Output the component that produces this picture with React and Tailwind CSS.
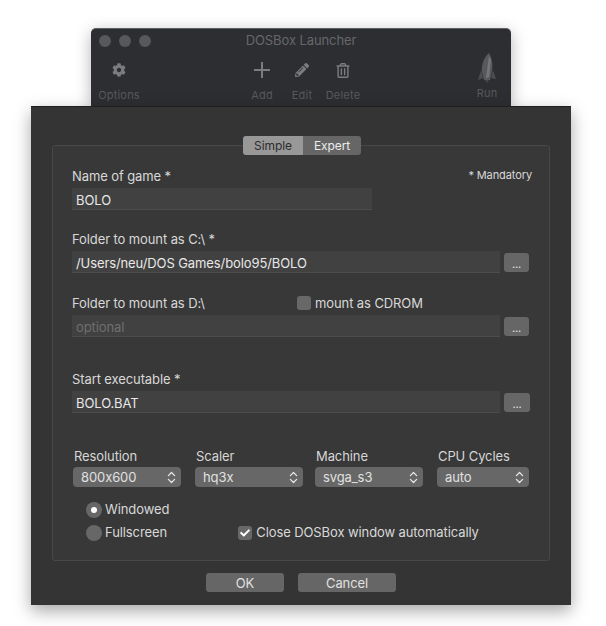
import React from "react";
import { FaCog, FaPencilAlt, FaRegTrashAlt, FaCheck } from "react-icons/fa";
import { LuChevronsUpDown } from "react-icons/lu";

function ToolItem({ label, className, children }) {
  return (
    <div className={`flex flex-col items-center ${className}`}>
      <div className="h-[34px] flex items-center justify-center text-[#7b7c7e]">{children}</div>
      <span className="mt-[1px] text-[11px] leading-[14px] tracking-[0.2px] text-[#58595c]">{label}</span>
    </div>
  );
}

function TextInput({ value, className, muted }) {
  return (
    <div
      className={`h-[22px] bg-[#414141] border-b border-[#4c4c4c] pl-[4px] pt-[5px] flex items-center text-[13px] ${
        muted ? "text-[#6f6f6f]" : "text-[#e8e8e8]"
      } ${className}`}
    >
      {value}
    </div>
  );
}

function BrowseButton({ className }) {
  return (
    <div className={`h-[19px] mt-[2px] rounded-[3px] bg-[#666666] flex items-end justify-center pb-[1px] text-[11px] leading-[14px] text-[#e4e4e4] ${className}`}>
      ...
    </div>
  );
}

function Select({ label, value, className }) {
  return (
    <div className={`flex flex-col ${className}`}>
      <span className="pl-[1px] h-[19px] text-[13px] leading-[16px] text-[#d6d6d6]">{label}</span>
      <div className="h-[20px] rounded-[4px] bg-[#676767] pl-[8px] pr-[2px] pt-[1px] flex items-center justify-between text-[13px] text-[#e0e0e0]">
        {value}
        <LuChevronsUpDown className="w-[15px] h-[15px] text-[#e8e8e8]" strokeWidth={2} />
      </div>
    </div>
  );
}

function Radio({ label, checked }) {
  return (
    <div className="h-[23px] flex items-center gap-[3px] text-[13px] text-[#d8d8d8]">
      <div className="w-[16px] h-[16px] rounded-full bg-[#676767] flex items-center justify-center">
        {checked && <div className="w-[6px] h-[6px] rounded-full bg-white" />}
      </div>
      {label}
    </div>
  );
}

function Checkbox({ checked, className }) {
  return (
    <div className={`w-[14px] h-[14px] rounded-[3px] bg-[#686868] flex items-center justify-center text-white ${className}`}>
      {checked && <FaCheck className="w-[10px] h-[10px]" />}
    </div>
  );
}

function Rocket() {
  return (
    <svg width="20" height="31" viewBox="0 0 20 31" fill="none">
      <path d="M4 17 L1 27 L6 25 Z M16 17 L19 26 L14 25 Z" fill="#4c4d50" />
      <path d="M12 0 C15 5 16 12 15 18 L13 27 L7 27 L5 19 C4 12 7 4 12 0 Z" fill="#58595c" />
      <path d="M12 3 L14 7 L12 24 L9 25 Z" fill="#75767a" />
      <path d="M8 27 L12 27 L10 30 Z" fill="#47484a" />
    </svg>
  );
}

export default function App() {
  return (
    <div className="w-[606px] h-[626px] bg-white pt-[28px] overflow-hidden font-['Inter','Liberation_Sans',sans-serif] [font-feature-settings:'calt'_0] tracking-[-0.1px]">
      {/* Launcher window behind the sheet */}
      <div className="ml-[91px] w-[420px] h-[78px] rounded-t-[5px] bg-[#2d2e31] border-t border-[#5f6062] shadow-[0_4px_16px_rgba(0,0,0,0.3)] relative">
        <div className="h-[23px] flex items-center relative">
          <div className="flex gap-[8px] pl-[8px]">
            <div className="w-[12px] h-[12px] rounded-full bg-[#57585a]" />
            <div className="w-[12px] h-[12px] rounded-full bg-[#57585a]" />
            <div className="w-[12px] h-[12px] rounded-full bg-[#57585a]" />
          </div>
          <span className="absolute inset-x-0 text-center text-[13px] text-[#66676a]">DOSBox Launcher</span>
        </div>
        <div className="flex pt-[1px]">
          <ToolItem label="Options" className="w-[56px]">
            <FaCog className="w-[14px] h-[14px]" />
          </ToolItem>
          <ToolItem label="Add" className="w-[40px] ml-[95px]">
            <svg width="18" height="18" viewBox="0 0 18 18">
              <path d="M9 1v16M1 9h16" stroke="currentColor" strokeWidth="2" />
            </svg>
          </ToolItem>
          <ToolItem label="Edit" className="w-[40px]">
            <FaPencilAlt className="w-[14px] h-[14px]" />
          </ToolItem>
          <ToolItem label="Delete" className="w-[40px] ml-[1px]">
            <FaRegTrashAlt className="w-[14px] h-[15px]" />
          </ToolItem>
          <div className="ml-[104px] w-[40px] flex flex-col items-center">
            <Rocket />
            <span className="mt-[2px] text-[11px] leading-[14px] tracking-[0.2px] text-[#58595c]">Run</span>
          </div>
        </div>
      </div>

      {/* Sheet */}
      <div className="relative ml-[31px] w-[540px] h-[499px] bg-[#343434] border-t border-[#1f1f1f] shadow-[0_6px_16px_rgba(0,0,0,0.35)] pt-[38px] px-[21px]">
        {/* Simple / Expert */}
        <div className="absolute left-[212px] top-[29px] w-[118px] h-[19px] rounded-[3px] overflow-hidden flex text-[12px]">
          <div className="w-[60px] bg-[#989898] text-[#2c2c2c] flex items-center justify-center">Simple</div>
          <div className="flex-1 bg-[#666666] text-[#ececec] flex items-center justify-center">Expert</div>
        </div>

        <div className="h-[416px] rounded-[3px] bg-[#383838] border border-[#484848] px-[19px] pt-[21px]">
          <div className="flex justify-between h-[21px]">
            <span className="text-[13px] leading-[18px] text-[#d8d8d8]">Name of game *</span>
            <span className="-mr-[2px] text-[11px] leading-[16px] text-[#d8d8d8]">* Mandatory</span>
          </div>
          <TextInput value="BOLO" className="w-[300px]" />

          <div className="mt-[20px] h-[21px] text-[13px] leading-[18px] text-[#d8d8d8]">Folder to mount as C:\ *</div>
          <div className="flex gap-[4px]">
            <TextInput value="/Users/neu/DOS Games/bolo95/BOLO" className="w-[428px]" />
            <BrowseButton className="w-[25px]" />
          </div>

          <div className="mt-[21px] h-[21px] flex text-[13px] leading-[18px] text-[#d8d8d8]">
            <span className="w-[225px]">Folder to mount as D:\</span>
            <Checkbox className="mt-[2px]" />
            <span className="ml-[4px]">mount as CDROM</span>
          </div>
          <div className="flex gap-[4px]">
            <TextInput value="optional" muted className="w-[428px]" />
            <BrowseButton className="w-[25px]" />
          </div>

          <div className="mt-[33px] h-[21px] text-[13px] leading-[18px] text-[#d8d8d8]">Start executable *</div>
          <div className="flex gap-[4px]">
            <TextInput value="BOLO.BAT" className="w-[428px]" />
            <BrowseButton className="w-[26px]" />
          </div>

          <div className="mt-[35px] flex pl-[1px]">
            <Select label="Resolution" value="800x600" className="w-[108px]" />
            <Select label="Scaler" value="hq3x" className="w-[108px] ml-[14px]" />
            <Select label="Machine" value="svga_s3" className="w-[108px] ml-[12px]" />
            <Select label="CPU Cycles" value="auto" className="w-[92px] ml-[14px]" />
          </div>

          <div className="mt-[11px] flex pl-[14px]">
            <div className="flex flex-col">
              <Radio label="Windowed" checked />
              <Radio label="Fullscreen" />
            </div>
            <div className="self-end h-[23px] ml-[69px] flex items-center gap-[4px] text-[13px] text-[#d8d8d8]">
              <Checkbox checked />
              Close DOSBox window automatically
            </div>
          </div>
        </div>

        <div className="mt-[12px] flex text-[13px] text-[#e0e0e0] pl-[154px] gap-[14px]">
          <div className="w-[78px] h-[19px] pt-[2px] rounded-[3px] bg-[#666666] flex items-center justify-center">OK</div>
          <div className="w-[98px] h-[19px] pt-[2px] rounded-[3px] bg-[#666666] flex items-center justify-center">Cancel</div>
        </div>
      </div>
    </div>
  );
}
